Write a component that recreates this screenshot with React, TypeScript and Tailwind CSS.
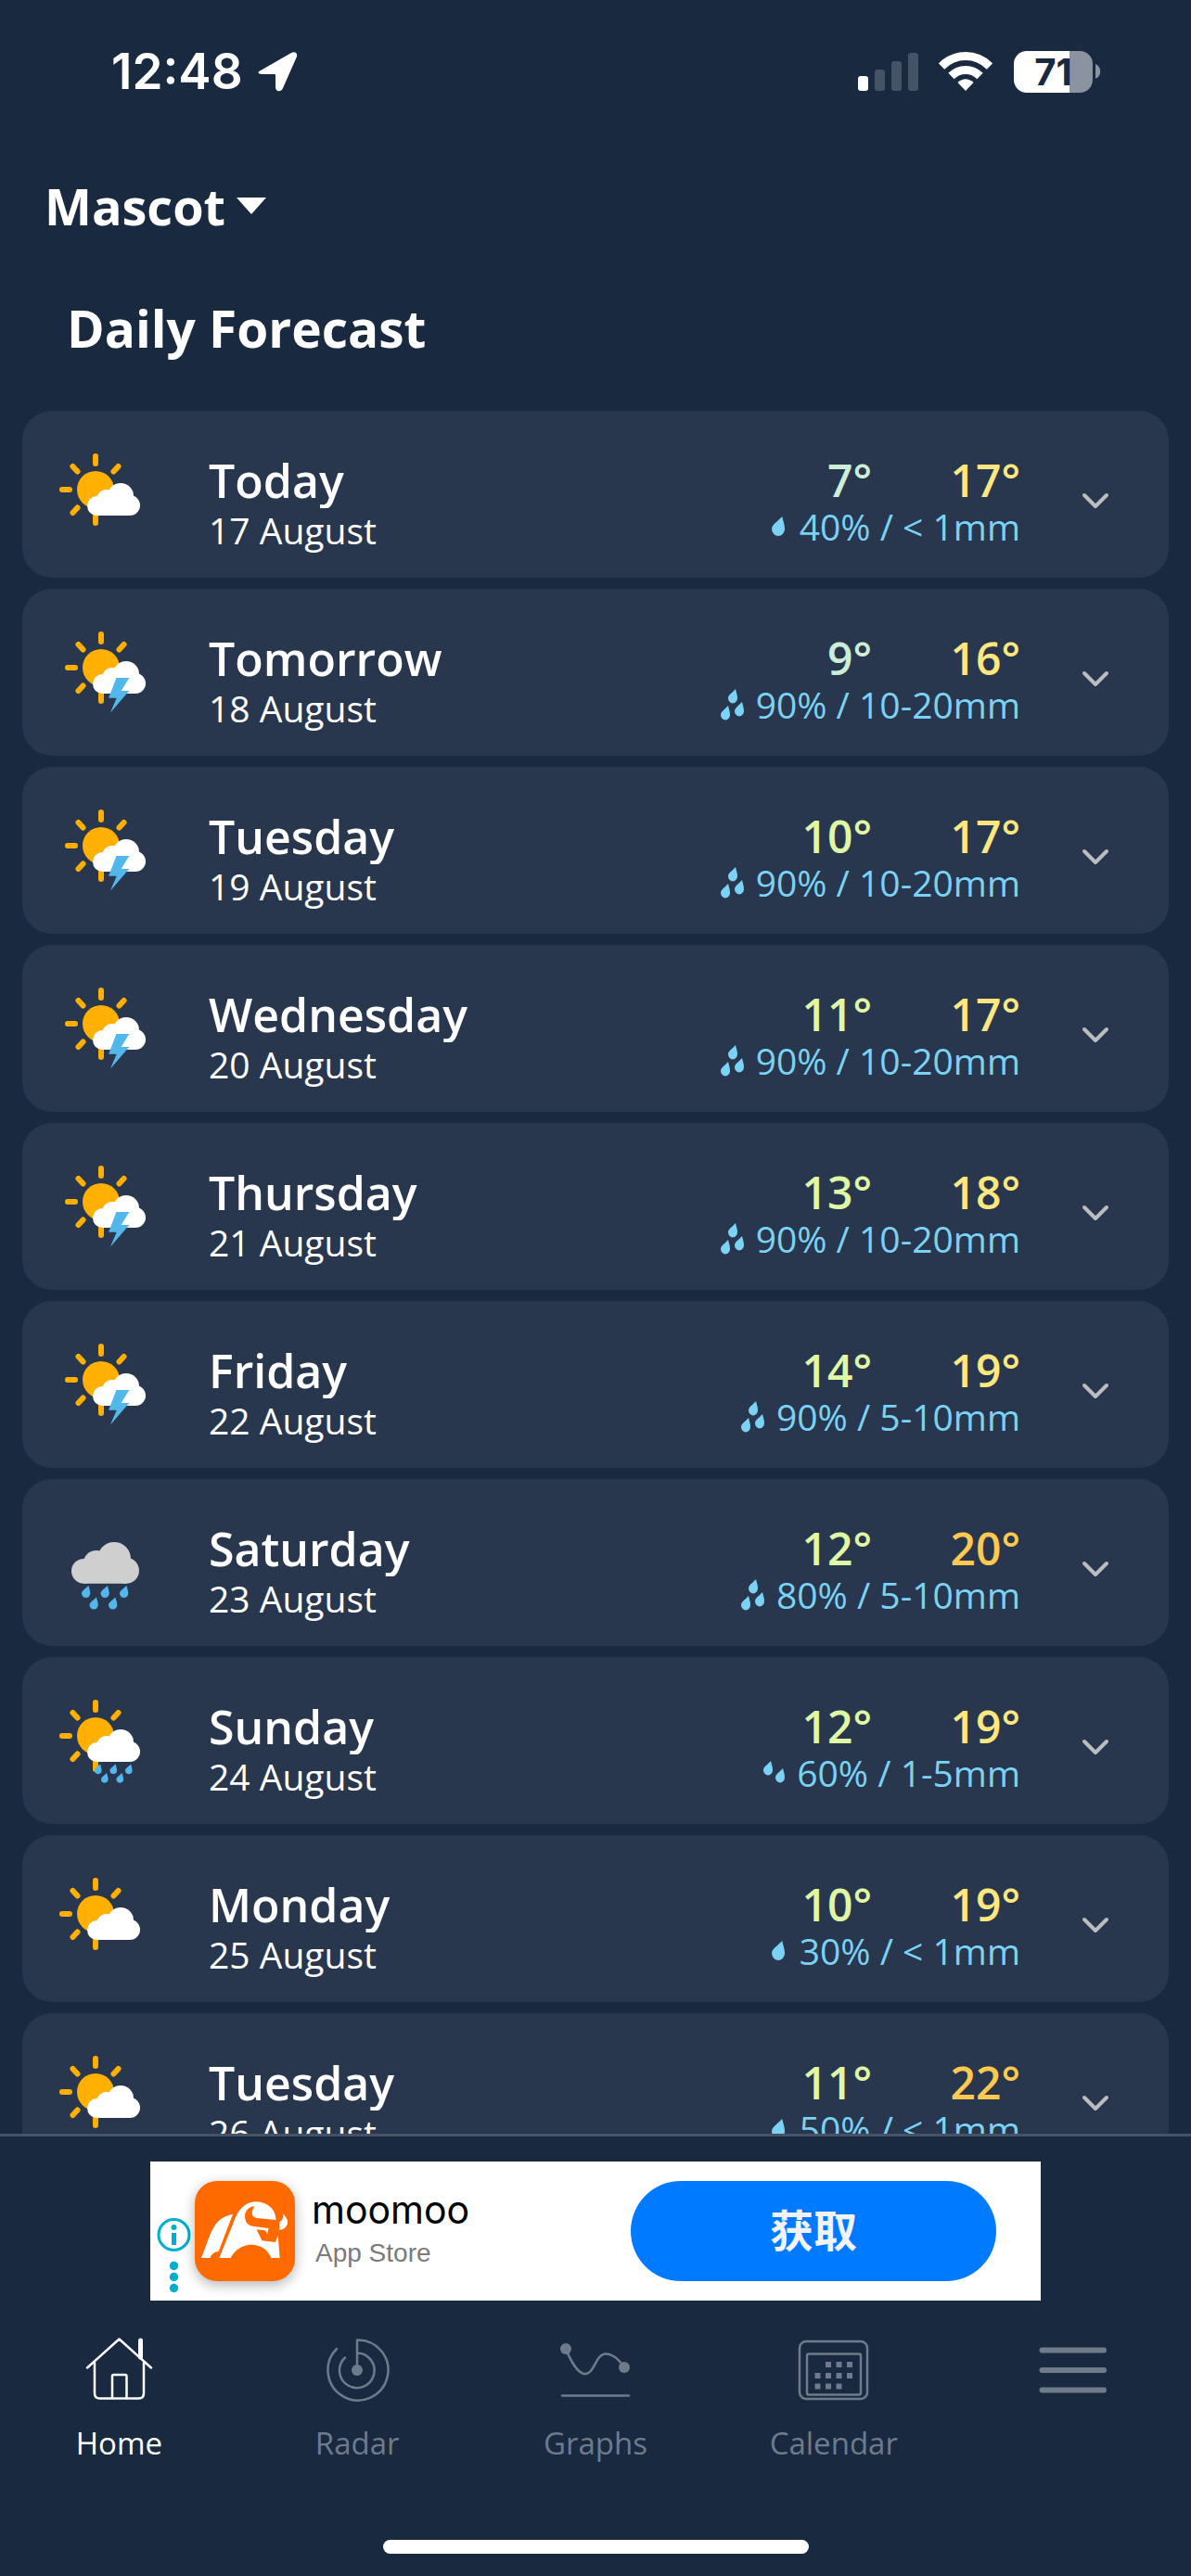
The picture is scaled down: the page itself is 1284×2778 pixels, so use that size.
import { useState } from 'react'

type Weather = 'partly-cloudy' | 'storm' | 'rain' | 'showers'

interface ForecastDay {
  day: string
  date: string
  weather: Weather
  low: number
  high: number
  chance: string
  amount: string
  drops: 1 | 2 | 3
}

const forecast: ForecastDay[] = [
  { day: 'Today', date: '17 August', weather: 'partly-cloudy', low: 7, high: 17, chance: '40%', amount: '< 1mm', drops: 1 },
  { day: 'Tomorrow', date: '18 August', weather: 'storm', low: 9, high: 16, chance: '90%', amount: '10-20mm', drops: 3 },
  { day: 'Tuesday', date: '19 August', weather: 'storm', low: 10, high: 17, chance: '90%', amount: '10-20mm', drops: 3 },
  { day: 'Wednesday', date: '20 August', weather: 'storm', low: 11, high: 17, chance: '90%', amount: '10-20mm', drops: 3 },
  { day: 'Thursday', date: '21 August', weather: 'storm', low: 13, high: 18, chance: '90%', amount: '10-20mm', drops: 3 },
  { day: 'Friday', date: '22 August', weather: 'storm', low: 14, high: 19, chance: '90%', amount: '5-10mm', drops: 3 },
  { day: 'Saturday', date: '23 August', weather: 'rain', low: 12, high: 20, chance: '80%', amount: '5-10mm', drops: 3 },
  { day: 'Sunday', date: '24 August', weather: 'showers', low: 12, high: 19, chance: '60%', amount: '1-5mm', drops: 2 },
  { day: 'Monday', date: '25 August', weather: 'partly-cloudy', low: 10, high: 19, chance: '30%', amount: '< 1mm', drops: 1 },
  { day: 'Tuesday', date: '26 August', weather: 'partly-cloudy', low: 11, high: 22, chance: '50%', amount: '< 1mm', drops: 1 }
]

const tempColor = (temp: number) => {
  if (temp < 10) return 'text-[#cdeed6]'
  if (temp < 15) return 'text-[#e0f7a4]'
  if (temp < 20) return 'text-[#ffe780]'
  return 'text-[#ffc84f]'
}

const DROP = 'M8 0C9 4 10 6 10 9A5 5 0 0 1 0 9C0 6 4 4 8 0Z'

const DROP_LAYOUT = {
  1: [[8, 6, 1.4, 1.5]],
  2: [[2, 4, 1, 1.1], [15, 12, 1, 1.1]],
  3: [[8, 0, 1, 1.1], [0, 18, 1, 1.1], [15, 14, 1, 1.1]]
}

function RainDrops({ count }: { count: 1 | 2 | 3 }) {
  return (
    <svg className="h-[34px] w-7 shrink-0" viewBox="0 0 28 34" fill="#7bd2f5" aria-hidden="true">
      {DROP_LAYOUT[count].map(([x, y, sx, sy]) => (
        <path key={x} d={DROP} transform={`translate(${x} ${y}) scale(${sx} ${sy})`} />
      ))}
    </svg>
  )
}

function Sun() {
  return (
    <g fill="#ffb000" stroke="#ffb000">
      <circle cx="43" cy="45" r="20" stroke="none" />
      <path
        d="M43 9V17M43 73V81M7 45H15M18.5 20L23.5 25.5M67.5 20L62.5 25.5M18.5 70L23.5 64.5"
        strokeWidth="6"
        strokeLinecap="round"
      />
    </g>
  )
}

function Cloud({ fill }: { fill: string }) {
  return (
    <g fill={fill}>
      <circle cx="36" cy="14" r="14" />
      <circle cx="21" cy="18" r="11" />
      <circle cx="10.5" cy="24.5" r="10.5" />
      <circle cx="46" cy="24" r="11" />
      <path d="M10.5 18H46V35H10.5Z" />
    </g>
  )
}

function WeatherIcon({ weather }: { weather: Weather }) {
  return (
    <svg className="h-[110px] w-[100px] shrink-0" viewBox="0 0 100 110" role="img" aria-label={weather}>
      {weather === 'partly-cloudy' && (
        <>
          <Sun />
          <g transform="translate(34 38)"><Cloud fill="#fff" /></g>
        </>
      )}
      {weather === 'storm' && (
        <g transform="translate(6 0)">
          <Sun />
          <g transform="translate(34 38)"><Cloud fill="#fff" /></g>
          <path d="M59.4 56H73.3L64.7 70H73.3L52.9 93.7L59.7 77.7H51.1Z" fill="#52b8ec" />
        </g>
      )}
      {weather === 'rain' && (
        <>
          <g transform="translate(17 28) scale(1.28)"><Cloud fill="#cfcfcf" /></g>
          <g fill="#52b8ec">
            {[[28, 75], [48.5, 75], [69, 75], [36.5, 87.5], [57, 87.5]].map(([x, y]) => (
              <path key={x} d={DROP} transform={`translate(${x} ${y}) scale(.93)`} />
            ))}
          </g>
        </>
      )}
      {weather === 'showers' && (
        <>
          <Sun />
          <g transform="translate(34 38)"><Cloud fill="#fff" /></g>
          <g fill="#52b8ec">
            {[[42, 75.5], [58.5, 75.5], [75, 75.5], [49, 85], [65.5, 85]].map(([x, y]) => (
              <path key={x} d={DROP} transform={`translate(${x} ${y}) scale(.76)`} />
            ))}
          </g>
        </>
      )}
    </svg>
  )
}

function StatusBar() {
  return (
    <div className="flex h-[154px] items-center justify-between pr-[97px] pl-[120px]">
      <div className="flex items-center gap-4">
        <span className="font-['Inter',sans-serif] text-[53px] leading-[64px] font-semibold">12:48</span>
        <svg className="h-11 w-11" viewBox="0 0 44 44" fill="#fff" aria-hidden="true">
          <path d="M3 21L36 2C40 0 43 2 42 6L27 40C25 45 19 44 19 39V26Q19 25 18 25H5C0 25 -1 23 3 21Z" />
        </svg>
      </div>
      <div className="flex items-center">
        <svg className="h-[45px] w-[66px]" viewBox="0 0 66 45" aria-hidden="true">
          <rect x="0" y="27" width="11" height="16" rx="3" fill="#fff" />
          <rect x="18" y="20" width="11" height="23" rx="3" fill="#465366" />
          <rect x="36" y="11" width="11" height="32" rx="3" fill="#465366" />
          <rect x="54" y="2" width="11" height="41" rx="3" fill="#465366" />
        </svg>
        <svg className="ml-[21px] h-[45px] w-[58px]" viewBox="0 0 58 45" aria-hidden="true">
          <g fill="none" stroke="#fff" strokeWidth="9">
            <path d="M3 16.500Q14 5.500 29 5.500T55 16.500" />
            <path d="M13.500 27Q20 20.500 29 20.500T44.500 27" />
          </g>
          <path d="M20.500 34Q29 26.500 37.500 34L29 43Z" fill="#fff" />
        </svg>
        <div className="ml-[23px] flex h-[45px] w-[85px] items-center justify-center rounded-[14px] bg-gradient-to-r from-white from-71% to-[#8c93a0] to-71% font-['Inter',sans-serif] text-[40px] leading-[45px] font-bold text-[#182940]">
          71
        </div>
        <svg className="ml-[3px] h-4 w-[6px]" viewBox="0 0 6 16" fill="#8c93a0" aria-hidden="true">
          <path d="M0 0C7 3 7 13 0 16Z" />
        </svg>
      </div>
    </div>
  )
}

interface ForecastRowProps {
  item: ForecastDay
  open: boolean
  onToggle: () => void
}

function ForecastRow({ item, open, onToggle }: ForecastRowProps) {
  return (
    <li>
      <button
        type="button"
        aria-expanded={open}
        onClick={onToggle}
        className="flex h-[180px] w-full items-start rounded-[32px] bg-[#28374e] pr-[63px] pl-9 text-left"
      >
        <span className="pt-10">
          <WeatherIcon weather={item.weather} />
        </span>
        <span className="ml-[65px] flex flex-1 flex-col pt-[45px]">
          <span className="overflow-hidden text-[50px] leading-[60px] font-semibold">{item.day}</span>
          <span className="text-[39px] leading-[48px]">{item.date}</span>
        </span>
        <span className="flex flex-col items-end pt-[45px]">
          <span className="flex text-right text-[48px] leading-[60px] font-semibold">
            <span className={tempColor(item.low)}>{`${item.low}°`}</span>
            <span className={`w-40 ${tempColor(item.high)}`}>{`${item.high}°`}</span>
          </span>
          <span className="flex items-center gap-[10px] text-[39px] leading-10 text-[#7bd2f5]">
            <RainDrops count={item.drops} />
            {`${item.chance} / ${item.amount}`}
          </span>
        </span>
        <svg className="mt-[88px] ml-[65px] h-5 w-8" viewBox="0 0 32 20" fill="none" aria-hidden="true">
          <path d="M4 3L16 15L28 3" stroke="#bdbdc0" strokeWidth="4" strokeLinecap="round" strokeLinejoin="round" />
        </svg>
      </button>
    </li>
  )
}

function AdBanner() {
  return (
    <aside className="mx-auto flex h-[150px] w-[960px] items-center bg-white pr-12 font-['Liberation_Sans',sans-serif]">
      <button type="button" aria-label="About this ad" className="w-12 self-end">
        <svg className="h-[93px] w-12" viewBox="0 0 48 93" fill="#00aecd">
          <circle cx="25.500" cy="22" r="16.500" fill="none" stroke="#00aecd" strokeWidth="3" />
          <circle cx="25.500" cy="14" r="3" />
          <rect x="23" y="20" width="5" height="13" />
          <circle cx="25.500" cy="55.500" r="4.700" />
          <circle cx="25.500" cy="67.500" r="4.700" />
          <circle cx="25.500" cy="79.500" r="4.700" />
        </svg>
      </button>
      <svg className="h-27 w-27 rounded-3xl bg-[#ff6a00] shadow-[0_4px_14px_rgba(0,0,0,0.3)]" viewBox="15 15 324 324" role="img" aria-label="moomoo logo">
        <path d="M36 264C50 230 62 190 76 165C92 138 112 128 138 122L92 243Q72 244 64 264Z" fill="#fff" />
        <path d="M94 264L140 150C155 105 180 82 215 82C250 84 275 105 277 136L284 193L290 264H262C240 208 160 206 131 264Z" fill="#fff" />
        <path d="M208 97C190 98 177 112 177 130C178 152 190 160 205 162L254 168L249 187L243 175L215 172L232 208L275 213L284 193L292 150L277 141L215 135C198 132 196 116 208 97Z" fill="#ff6a00" />
        <path d="M299 121C308 128 317 140 315 152C312 164 302 173 288 174C291 164 286 154 290 147C300 143 302 132 299 121Z" fill="#fff" />
      </svg>
      <div className="ml-[18px] flex flex-1 flex-col">
        <span className="font-['Inter',sans-serif] text-[41px] leading-[48px] text-black">moomoo</span>
        <span className="ml-1 text-[28px] leading-[46px] text-[#7a7a7a]">App Store</span>
      </div>
      <button
        type="button"
        className="h-27 w-[394px] rounded-full bg-[#007aff] font-['Inter','Noto_Sans_CJK_SC',sans-serif] text-[47px] font-bold text-[#f2f2f7]"
      >
        获取
      </button>
    </aside>
  )
}

const tabs = [
  {
    label: 'Home',
    icon: (
      <>
        <path d="M6 39.500L40.500 8.500L75 39.500M14 34V67Q14 72.500 19.500 72.500H61.500Q67 72.500 67 67V34M33 72V48.500Q33 47 34.500 47H47Q48.500 47 48.500 48.500V72" />
        <path d="M63.500 10V28" strokeWidth="5" />
      </>
    )
  },
  {
    label: 'Radar',
    icon: (
      <>
        <path d="M40 42V9.500A32.500 32.500 0 1 1 18 19M40 23.500A18.800 18.800 0 1 1 27 28.500" />
        <circle cx="40" cy="42" r="6" fill="currentColor" stroke="none" />
      </>
    )
  },
  {
    label: 'Graphs',
    icon: (
      <>
        <path d="M8 19C14 34 22 46 29 46C39 46 40 24.500 51 24.500C60 24.500 66 32 71 39M4 69.500H76" />
        <circle cx="8" cy="19" r="6" fill="currentColor" stroke="none" />
        <circle cx="71" cy="39" r="6" fill="currentColor" stroke="none" />
      </>
    )
  },
  {
    label: 'Calendar',
    icon: (
      <>
        <rect x="3" y="11" width="73" height="62" rx="7" />
        <rect x="11" y="24.500" width="58" height="44" rx="2" />
        <path d="M31 36H61M19.500 48H61M19.500 59.500H49" strokeWidth="6" strokeDasharray="6 5.500" strokeLinecap="butt" />
      </>
    )
  }
]

export default function App() {
  const [activeTab, setActiveTab] = useState('Home')
  const [openDay, setOpenDay] = useState<string | null>(null)

  return (
    <div className="flex h-screen flex-col overflow-hidden bg-[#182940] font-['Open_Sans','Noto_Sans',sans-serif] text-white">
      <StatusBar />

      <header className="px-12 pt-9">
        <button type="button" className="flex items-center gap-3 text-[54px] leading-[64px] font-bold">
          Mascot
          <svg className="h-[18px] w-8" viewBox="0 0 32 18" fill="#fff" aria-hidden="true">
            <path d="M0 0H32L16 18Z" />
          </svg>
        </button>
      </header>

      <main className="flex min-h-0 flex-1 flex-col overflow-hidden px-6 pt-16">
        <h1 className="pl-12 text-[55px] leading-[72px] font-bold">Daily Forecast</h1>
        <ul className="mt-[53px] flex flex-col gap-3">
          {forecast.map((item) => (
            <ForecastRow
              key={item.date}
              item={item}
              open={openDay === item.date}
              onToggle={() => setOpenDay(openDay === item.date ? null : item.date)}
            />
          ))}
        </ul>
      </main>

      <footer className="shrink-0 border-t-[3px] border-[#465366] pt-[27px]">
        <AdBanner />
        <nav className="mt-[33px] grid grid-cols-5">
          {tabs.map((tab) => (
            <button
              key={tab.label}
              type="button"
              onClick={() => setActiveTab(tab.label)}
              className={`flex flex-col items-center text-[33px] leading-[48px] ${
                activeTab === tab.label ? 'text-white' : 'text-[#6f7b8a]'
              }`}
            >
              <svg
                className="h-20 w-20"
                viewBox="0 0 80 80"
                fill="none"
                stroke="currentColor"
                strokeWidth="2.500"
                strokeLinecap="round"
                strokeLinejoin="round"
                aria-hidden="true"
              >
                {tab.icon}
              </svg>
              <span className="mt-[17px]">{tab.label}</span>
            </button>
          ))}
          <button type="button" aria-label="Menu" className="flex flex-col items-center text-[#6f7b8a]">
            <svg className="h-20 w-20" viewBox="0 0 80 80" stroke="currentColor" strokeWidth="6" strokeLinecap="round">
              <path d="M7.500 20.500H74M7.500 42H74M7.500 63.500H74" />
            </svg>
          </button>
        </nav>
        <div className="mx-auto mt-20 mb-6 h-[15px] w-[459px] rounded-full bg-white" />
      </footer>
    </div>
  )
}
